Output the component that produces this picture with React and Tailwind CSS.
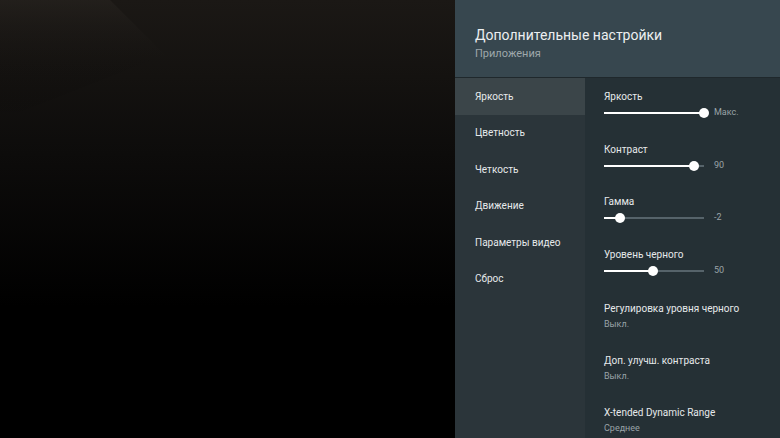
import React from 'react';

const menu = ['Яркость', 'Цветность', 'Четкость', 'Движение', 'Параметры видео', 'Сброс'];

const sliders = [
  { label: 'Яркость', pct: 100, value: 'Макс.' },
  { label: 'Контраст', pct: 90, value: '90' },
  { label: 'Гамма', pct: 16, value: '-2' },
  { label: 'Уровень черного', pct: 49, value: '50' },
];

const options = [
  { label: 'Регулировка уровня черного', value: 'Выкл.' },
  { label: 'Доп. улучш. контраста', value: 'Выкл.' },
  { label: 'X-tended Dynamic Range', value: 'Среднее' },
];

function Slider({ pct, value }) {
  return (
    <div className="flex items-center h-[12px]">
      <div className="relative w-[100px] h-[2px] bg-[#56636a]">
        <div className="absolute left-0 top-0 h-[2px] bg-white" style={{ width: `${pct}%` }} />
        <div
          className="absolute top-[-4px] w-[10px] h-[10px] rounded-full bg-white"
          style={{ left: `calc(${pct}% - 5px)` }}
        />
      </div>
      <span className="ml-[10px] text-[9px] text-[#9aa3a8]">{value}</span>
    </div>
  );
}

export default function App() {
  return (
    <div
      className="flex w-[780px] h-[438px] overflow-hidden"
      style={{ fontFamily: 'Roboto, "Noto Sans", sans-serif' }}
    >
      {/* фон слева */}
      <div className="relative w-[455px] h-full bg-[linear-gradient(180deg,#1b1815_0%,#0d0c0b_35%,#000_70%)] overflow-hidden">
        <svg className="absolute left-0 top-0" width="455" height="200">
          <defs>
            <linearGradient id="gl" x1="0" y1="0" x2="0" y2="1">
              <stop offset="0" stopColor="#2a2622" stopOpacity="0.5" />
              <stop offset="1" stopColor="#000" stopOpacity="0" />
            </linearGradient>
          </defs>
          <polygon points="0,0 110,0 165,55 0,120" fill="url(#gl)" />
        </svg>
      </div>

      {/* панель настроек */}
      <div className="flex flex-col w-[325px] h-full bg-[#263238]">
        <div className="shrink-0 h-[78px] bg-[#37474f] px-[20px] pt-[25px] border-b border-[#1f282c]">
          <div className="text-[14px] leading-[20px] text-[#eceff1]">Дополнительные настройки</div>
          <div className="text-[11px] leading-[16px] mt-[1px] text-[#9ea7ab]">Приложения</div>
        </div>
        <div className="flex flex-1 min-h-0">
          <div className="w-[130px] bg-[#2b353a]">
            {menu.map((item, i) => (
              <div
                key={item}
                className={`h-[36.5px] flex items-center pl-[20px] text-[10px] text-[#e6e9eb] ${
                  i === 0 ? 'bg-[#3b4549]' : ''
                }`}
              >
                {item}
              </div>
            ))}
          </div>
          <div className="flex-1 bg-[#253035] pl-[19px] pt-[12px]">
            {sliders.map((s) => (
              <div key={s.label} className="h-[52.5px]">
                <div className="text-[10px] leading-[14px] text-[#e6e9eb]">{s.label}</div>
                <div className="mt-[3px]">
                  <Slider pct={s.pct} value={s.value} />
                </div>
              </div>
            ))}
            {options.map((o) => (
              <div key={o.label} className="h-[52px] pt-[2px]">
                <div className="text-[10px] leading-[14px] text-[#e6e9eb]">{o.label}</div>
                <div className="text-[9px] leading-[12px] mt-[2px] text-[#9aa3a8]">{o.value}</div>
              </div>
            ))}
          </div>
        </div>
      </div>
    </div>
  );
}
